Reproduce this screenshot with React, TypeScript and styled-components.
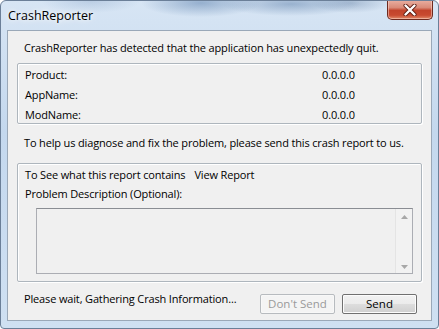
import React from "react";
import styled, { createGlobalStyle } from "styled-components";

const GlobalStyle = createGlobalStyle`
  html, body {
    margin: 0;
    padding: 0;
    background: #ffffff;
  }
  * {
    box-sizing: border-box;
  }
`;

const Window = styled.div`
  width: 439px;
  height: 329px;
  display: flex;
  flex-direction: column;
  border: 1px solid #6b7f98;
  border-radius: 6px 6px 4px 4px;
  overflow: hidden;
  background:
    radial-gradient(ellipse 60px 14px at 200px 2px, rgba(70, 110, 160, 0.45), transparent),
    radial-gradient(ellipse 70px 12px at 290px 3px, rgba(60, 100, 150, 0.4), transparent),
    radial-gradient(ellipse 40px 10px at 350px 2px, rgba(80, 110, 150, 0.35), transparent),
    radial-gradient(ellipse 50px 12px at 90px 0px, rgba(120, 150, 190, 0.3), transparent),
    linear-gradient(180deg, #d7e5f4 0%, #c4d8ee 40%, #cfe0f2 100%);
  font-family: "Open Sans", "Liberation Sans", sans-serif;
  color: #000000;
`;

const TitleBar = styled.div`
  height: 29px;
  display: flex;
  align-items: flex-start;
  justify-content: space-between;
  padding-left: 7px;
`;

const Title = styled.span`
  margin-top: 6px;
  font-size: 12.5px;
  line-height: 18px;
  color: #000000;
  text-shadow: 0 0 8px rgba(255, 255, 255, 0.9), 0 0 4px #ffffff;
`;

const CloseButton = styled.div`
  width: 46px;
  height: 20px;
  margin-right: 5px;
  margin-top: -1px;
  display: flex;
  align-items: center;
  justify-content: center;
  border: 1px solid #6d2a1f;
  border-top: none;
  border-radius: 0 0 5px 5px;
  background: linear-gradient(180deg, #eab0a2 0%, #d98a78 40%, #c2432b 55%, #c84a30 80%, #e08a6a 100%);
  box-shadow: inset 0 0 0 1px rgba(255, 220, 210, 0.5);
`;

const Client = styled.div`
  flex: 1;
  margin: 0 6px 7px 6px;
  display: flex;
  flex-direction: column;
  padding: 0 9px 0 9px;
  background: #f0f0f0;
  border: 1px solid #9aa8b8;
  font-size: 11px;
  letter-spacing: -0.15px;
  line-height: 16px;
`;

const Text = styled.div<{ $top: number }>`
  margin-top: ${(p) => p.$top}px;
  padding-left: 7px;
  white-space: nowrap;
`;

const GroupBox = styled.div<{ $top: number }>`
  margin-top: ${(p) => p.$top}px;
  border: 1px solid #aeb6bd;
  border-radius: 2px;
  box-shadow: inset 1px 1px 0 #ffffff, 1px 1px 0 #ffffff;
  display: flex;
  flex-direction: column;
  padding: 3px 8px 0 7px;
`;

const InfoGrid = styled.div`
  display: grid;
  grid-template-columns: 297px auto;
  row-gap: 4px;
  height: 56px;
`;

const Cell = styled.span``;

const LinkRow = styled.div`
  display: flex;
  gap: 9px;
`;

const Caption = styled.div`
  margin-top: 3px;
`;

const DescBox = styled.div`
  margin: 6px 0 7px 11px;
  height: 66px;
  display: flex;
  border: 1px solid #abadb3;
  border-top-color: #8a8d93;
  background: #f0f0f0;
`;

const DescArea = styled.textarea`
  flex: 1;
  border: none;
  background: transparent;
  resize: none;
  outline: none;
  font: inherit;
`;

const ScrollTrack = styled.div`
  width: 17px;
  display: flex;
  flex-direction: column;
  justify-content: space-between;
  align-items: center;
  padding: 6px 0 4px 0;
  border-left: 1px solid #e4e4e4;
  background: #f2f2f2;
`;

const Footer = styled.div`
  margin-top: 12px;
  display: flex;
  align-items: center;
  padding: 0 5px 0 7px;
`;

const Status = styled.span`
  flex: 1;
  white-space: nowrap;
  margin-top: -10px;
`;

const Button = styled.button<{ $disabled?: boolean }>`
  width: 75px;
  height: 20px;
  margin-left: ${(p) => (p.$disabled ? 0 : 7)}px;
  padding: 0;
  font: inherit;
  font-size: 11.5px;
  border-radius: 2px;
  border: 1px solid ${(p) => (p.$disabled ? "#b7bbbf" : "#707070")};
  background: ${(p) =>
    p.$disabled
      ? "#f4f4f4"
      : "linear-gradient(180deg, #f2f2f2 0%, #ebebeb 50%, #dddddd 51%, #cfcfcf 100%)"};
  color: ${(p) => (p.$disabled ? "#9a9a9a" : "#000000")};
  box-shadow: inset 0 0 0 1px ${(p) => (p.$disabled ? "#f8f8f8" : "#fcfcfc")};
`;

const Arrow = ({ up }: { up?: boolean }) => (
  <svg width="7" height="4" viewBox="0 0 7 4">
    <path d={up ? "M0 4 L3.5 0 L7 4 Z" : "M0 0 L3.5 4 L7 0 Z"} fill="#a8a8a8" />
  </svg>
);

const CloseIcon = () => (
  <svg width="14" height="12" viewBox="0 0 14 12">
    <path
      d="M2.5 1.5 L11.5 10.5 M11.5 1.5 L2.5 10.5"
      stroke="#5a1a10"
      strokeWidth="4"
      fill="none"
      strokeLinecap="round"
    />
    <path d="M2.5 1.5 L11.5 10.5 M11.5 1.5 L2.5 10.5" stroke="#ffffff" strokeWidth="2.4" strokeLinecap="round" />
  </svg>
);

const rows = [
  { label: "Product:", value: "0.0.0.0" },
  { label: "AppName:", value: "0.0.0.0" },
  { label: "ModName:", value: "0.0.0.0" },
];

export default function App() {
  return (
    <>
      <GlobalStyle />
      <Window>
        <TitleBar>
          <Title>CrashReporter</Title>
          <CloseButton>
            <CloseIcon />
          </CloseButton>
        </TitleBar>
        <Client>
          <Text $top={9}>CrashReporter has detected that the application has unexpectedly quit.</Text>
          <GroupBox $top={7}>
            <InfoGrid>
              {rows.map((r) => (
                <React.Fragment key={r.label}>
                  <Cell>{r.label}</Cell>
                  <Cell>{r.value}</Cell>
                </React.Fragment>
              ))}
            </InfoGrid>
          </GroupBox>
          <Text $top={11}>To help us diagnose and fix the problem, please send this crash report to us.</Text>
          <GroupBox $top={12}>
            <LinkRow>
              <span>To See what this report contains</span>
              <span>View Report</span>
            </LinkRow>
            <Caption>Problem Description (Optional):</Caption>
            <DescBox>
              <DescArea disabled />
              <ScrollTrack>
                <Arrow up />
                <Arrow />
              </ScrollTrack>
            </DescBox>
          </GroupBox>
          <Footer>
            <Status>Please wait, Gathering Crash Information...</Status>
            <Button $disabled disabled>
              Don't Send
            </Button>
            <Button>Send</Button>
          </Footer>
        </Client>
      </Window>
    </>
  );
}
